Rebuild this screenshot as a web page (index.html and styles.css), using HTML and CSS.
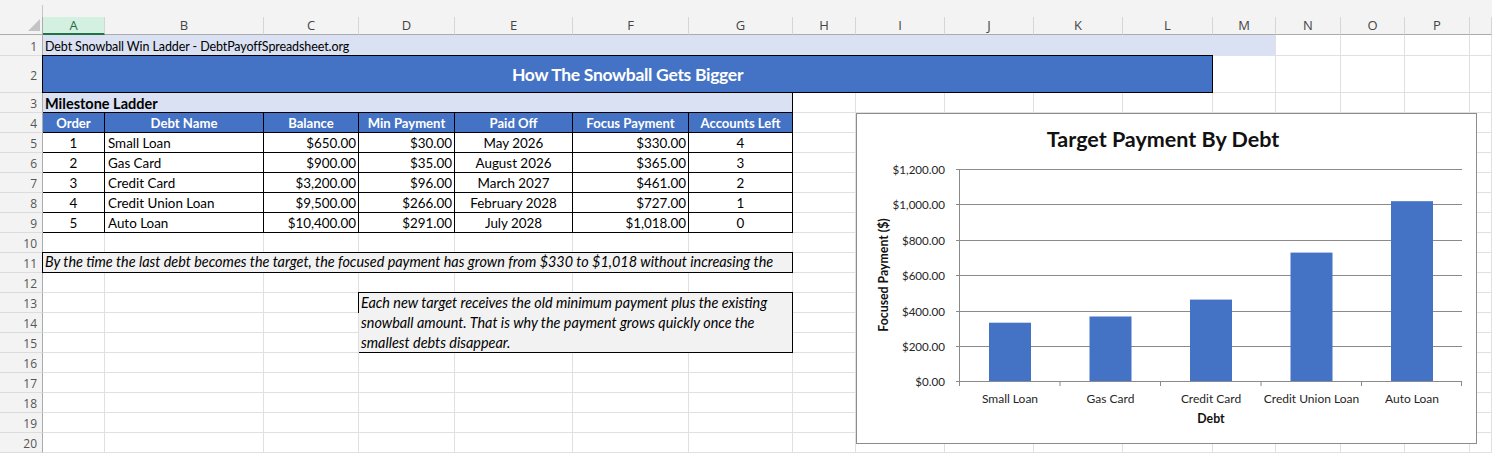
FILE: index.html
```html
<!DOCTYPE html>
<html>
<head>
  <meta charset="utf-8">
  <link rel="stylesheet" href="styles.css">
</head>
<body>
  <div class="topbar"><div class="namebox"></div></div>

  <div class="sheet">
    <!-- column headers -->
    <div class="corner"></div>
    <div class="ch sel">A</div><div class="ch">B</div><div class="ch">C</div><div class="ch">D</div><div class="ch">E</div><div class="ch">F</div><div class="ch">G</div><div class="ch">H</div><div class="ch">I</div><div class="ch">J</div><div class="ch">K</div><div class="ch">L</div><div class="ch">M</div><div class="ch">N</div><div class="ch">O</div><div class="ch">P</div><div class="ch"></div>

    <!-- row 1 -->
    <div class="rh">1</div>
    <div class="c band">Debt Snowball Win Ladder - DebtPayoffSpreadsheet.org</div>
    <div class="c"></div><div class="c"></div><div class="c"></div><div class="c"></div>

    <!-- row 2 -->
    <div class="rh">2</div>
    <div class="banner">How The Snowball Gets Bigger</div>
    <div class="c"></div><div class="c"></div><div class="c"></div><div class="c"></div><div class="c"></div>

    <!-- row 3 -->
    <div class="rh">3</div>
    <div class="c section">Milestone Ladder</div>
    <div class="c"></div><div class="c"></div><div class="c"></div><div class="c"></div><div class="c"></div><div class="c"></div><div class="c"></div><div class="c"></div><div class="c"></div><div class="c"></div>

    <!-- row 4: table header -->
    <div class="rh">4</div>
    <div class="c th">Order</div>
    <div class="c th">Debt Name</div>
    <div class="c th">Balance</div>
    <div class="c th">Min Payment</div>
    <div class="c th">Paid Off</div>
    <div class="c th">Focus Payment</div>
    <div class="c th">Accounts Left</div>
    <div class="c"></div><div class="c"></div><div class="c"></div><div class="c"></div><div class="c"></div><div class="c"></div><div class="c"></div><div class="c"></div><div class="c"></div><div class="c"></div>

    <!-- rows 5-9: debts -->
    <div class="rh">5</div>
    <div class="c td ctr">1</div>
    <div class="c td">Small Loan</div>
    <div class="c td num">$650.00</div>
    <div class="c td num">$30.00</div>
    <div class="c td ctr">May 2026</div>
    <div class="c td num">$330.00</div>
    <div class="c td ctr">4</div>
    <div class="c"></div><div class="c"></div><div class="c"></div><div class="c"></div><div class="c"></div><div class="c"></div><div class="c"></div><div class="c"></div><div class="c"></div><div class="c"></div>

    <div class="rh">6</div>
    <div class="c td ctr">2</div>
    <div class="c td">Gas Card</div>
    <div class="c td num">$900.00</div>
    <div class="c td num">$35.00</div>
    <div class="c td ctr">August 2026</div>
    <div class="c td num">$365.00</div>
    <div class="c td ctr">3</div>
    <div class="c"></div><div class="c"></div><div class="c"></div><div class="c"></div><div class="c"></div><div class="c"></div><div class="c"></div><div class="c"></div><div class="c"></div><div class="c"></div>

    <div class="rh">7</div>
    <div class="c td ctr">3</div>
    <div class="c td">Credit Card</div>
    <div class="c td num">$3,200.00</div>
    <div class="c td num">$96.00</div>
    <div class="c td ctr">March 2027</div>
    <div class="c td num">$461.00</div>
    <div class="c td ctr">2</div>
    <div class="c"></div><div class="c"></div><div class="c"></div><div class="c"></div><div class="c"></div><div class="c"></div><div class="c"></div><div class="c"></div><div class="c"></div><div class="c"></div>

    <div class="rh">8</div>
    <div class="c td ctr">4</div>
    <div class="c td">Credit Union Loan</div>
    <div class="c td num">$9,500.00</div>
    <div class="c td num">$266.00</div>
    <div class="c td ctr">February 2028</div>
    <div class="c td num">$727.00</div>
    <div class="c td ctr">1</div>
    <div class="c"></div><div class="c"></div><div class="c"></div><div class="c"></div><div class="c"></div><div class="c"></div><div class="c"></div><div class="c"></div><div class="c"></div><div class="c"></div>

    <div class="rh">9</div>
    <div class="c td ctr">5</div>
    <div class="c td">Auto Loan</div>
    <div class="c td num">$10,400.00</div>
    <div class="c td num">$291.00</div>
    <div class="c td ctr">July 2028</div>
    <div class="c td num">$1,018.00</div>
    <div class="c td ctr">0</div>
    <div class="c"></div><div class="c"></div><div class="c"></div><div class="c"></div><div class="c"></div><div class="c"></div><div class="c"></div><div class="c"></div><div class="c"></div><div class="c"></div>

    <!-- row 10 -->
    <div class="rh">10</div>
    <div class="c"></div><div class="c"></div><div class="c"></div><div class="c"></div><div class="c"></div><div class="c"></div><div class="c"></div><div class="c"></div><div class="c"></div><div class="c"></div><div class="c"></div><div class="c"></div><div class="c"></div><div class="c"></div><div class="c"></div><div class="c"></div><div class="c"></div>

    <!-- row 11 -->
    <div class="rh">11</div>
    <div class="summary">By the time the last debt becomes the target, the focused payment has grown from $330 to $1,018 without increasing the</div>
    <div class="c"></div><div class="c"></div><div class="c"></div><div class="c"></div><div class="c"></div><div class="c"></div><div class="c"></div><div class="c"></div><div class="c"></div><div class="c"></div>

    <!-- row 12 -->
    <div class="rh">12</div>
    <div class="c"></div><div class="c"></div><div class="c"></div><div class="c"></div><div class="c"></div><div class="c"></div><div class="c"></div><div class="c"></div><div class="c"></div><div class="c"></div><div class="c"></div><div class="c"></div><div class="c"></div><div class="c"></div><div class="c"></div><div class="c"></div><div class="c"></div>

    <!-- rows 13-15, note box spans D:G -->
    <div class="rh">13</div>
    <div class="c"></div><div class="c"></div><div class="c"></div>
    <div class="explain">Each new target receives the old minimum payment plus the existing<br>snowball amount. That is why the payment grows quickly once the<br>smallest debts disappear.</div>
    <div class="c"></div><div class="c"></div><div class="c"></div><div class="c"></div><div class="c"></div><div class="c"></div><div class="c"></div><div class="c"></div><div class="c"></div><div class="c"></div>

    <div class="rh">14</div>
    <div class="c"></div><div class="c"></div><div class="c"></div>
    <div class="c"></div><div class="c"></div><div class="c"></div><div class="c"></div><div class="c"></div><div class="c"></div><div class="c"></div><div class="c"></div><div class="c"></div><div class="c"></div>

    <div class="rh">15</div>
    <div class="c"></div><div class="c"></div><div class="c"></div>
    <div class="c"></div><div class="c"></div><div class="c"></div><div class="c"></div><div class="c"></div><div class="c"></div><div class="c"></div><div class="c"></div><div class="c"></div><div class="c"></div>

    <!-- rows 16-20 -->
    <div class="rh">16</div>
    <div class="c"></div><div class="c"></div><div class="c"></div><div class="c"></div><div class="c"></div><div class="c"></div><div class="c"></div><div class="c"></div><div class="c"></div><div class="c"></div><div class="c"></div><div class="c"></div><div class="c"></div><div class="c"></div><div class="c"></div><div class="c"></div><div class="c"></div>
    <div class="rh">17</div>
    <div class="c"></div><div class="c"></div><div class="c"></div><div class="c"></div><div class="c"></div><div class="c"></div><div class="c"></div><div class="c"></div><div class="c"></div><div class="c"></div><div class="c"></div><div class="c"></div><div class="c"></div><div class="c"></div><div class="c"></div><div class="c"></div><div class="c"></div>
    <div class="rh">18</div>
    <div class="c"></div><div class="c"></div><div class="c"></div><div class="c"></div><div class="c"></div><div class="c"></div><div class="c"></div><div class="c"></div><div class="c"></div><div class="c"></div><div class="c"></div><div class="c"></div><div class="c"></div><div class="c"></div><div class="c"></div><div class="c"></div><div class="c"></div>
    <div class="rh">19</div>
    <div class="c"></div><div class="c"></div><div class="c"></div><div class="c"></div><div class="c"></div><div class="c"></div><div class="c"></div><div class="c"></div><div class="c"></div><div class="c"></div><div class="c"></div><div class="c"></div><div class="c"></div><div class="c"></div><div class="c"></div><div class="c"></div><div class="c"></div>
    <div class="rh">20</div>
    <div class="c"></div><div class="c"></div><div class="c"></div><div class="c"></div><div class="c"></div><div class="c"></div><div class="c"></div><div class="c"></div><div class="c"></div><div class="c"></div><div class="c"></div><div class="c"></div><div class="c"></div><div class="c"></div><div class="c"></div><div class="c"></div><div class="c"></div>

    <!-- floating chart -->
    <div class="chart">
      <svg width="619" height="329" viewBox="0 0 619 329">
        <text class="chart-title" x="306" y="33" text-anchor="middle">Target Payment By Debt</text>

        <g class="gridline">
          <line x1="99" y1="55.5" x2="605" y2="55.5"/>
          <line x1="99" y1="90.5" x2="605" y2="90.5"/>
          <line x1="99" y1="126.5" x2="605" y2="126.5"/>
          <line x1="99" y1="161.5" x2="605" y2="161.5"/>
          <line x1="99" y1="197.5" x2="605" y2="197.5"/>
          <line x1="99" y1="232.5" x2="605" y2="232.5"/>
          <line x1="102.5" y1="55" x2="102.5" y2="268"/>
        </g>

        <g class="bar">
          <rect x="132" y="208.7" width="42" height="58.8"/>
          <rect x="232.5" y="202.5" width="42" height="65"/>
          <rect x="333" y="185.6" width="42" height="81.9"/>
          <rect x="433.5" y="138.6" width="42" height="128.9"/>
          <rect x="534" y="87.2" width="42" height="180.3"/>
        </g>

        <g class="gridline">
          <line x1="99" y1="267.5" x2="605" y2="267.5"/>
          <line x1="203" y1="267" x2="203" y2="272"/>
          <line x1="303.5" y1="267" x2="303.5" y2="272"/>
          <line x1="404" y1="267" x2="404" y2="272"/>
          <line x1="504.5" y1="267" x2="504.5" y2="272"/>
          <line x1="604.5" y1="267" x2="604.5" y2="272"/>
          <line x1="102.5" y1="267" x2="102.5" y2="272"/>
        </g>

        <g class="axis-label value" text-anchor="end">
          <text x="88" y="60">$1,200.00</text>
          <text x="88" y="95">$1,000.00</text>
          <text x="88" y="131">$800.00</text>
          <text x="88" y="166">$600.00</text>
          <text x="88" y="202">$400.00</text>
          <text x="88" y="237">$200.00</text>
          <text x="88" y="272">$0.00</text>
        </g>

        <g class="axis-label" text-anchor="middle">
          <text x="153" y="289">Small Loan</text>
          <text x="253.5" y="289">Gas Card</text>
          <text x="354" y="289">Credit Card</text>
          <text x="454.5" y="289">Credit Union Loan</text>
          <text x="555" y="289">Auto Loan</text>
        </g>

        <text class="axis-title" x="354" y="309" text-anchor="middle">Debt</text>
        <text class="axis-title" transform="translate(31 161) rotate(-90)" text-anchor="middle">Focused Payment ($)</text>
      </svg>
    </div>
  </div>
</body>
</html>
```

FILE: styles.css
```css
* {
  box-sizing: border-box;
}

body {
  margin: 0;
  background: #ffffff;
  font-family: Lato, "Liberation Sans", sans-serif;
  color: #000000;
}

.topbar {
  height: 17px;
  padding-top: 5px;
  background: #f3f3f3;
}

.topbar .namebox {
  width: 43px;
  height: 12px;
  border-right: 1px solid #c6c6c6;
}

/* grid of cells */
.sheet {
  position: relative;
  display: grid;
  grid-template-columns: 43px 62px 159px 95px 96px 118px 116px 104px 63px 89px 89px 89px 90px 63px 65px 64px 65px 1fr;
  grid-template-rows: 18px 21px 37px repeat(18, 20px);
  font-size: 13.4px;
}

.corner {
  display: flex;
  justify-content: flex-end;
  align-items: flex-end;
  padding: 0 2px 3px 0;
  background: #f3f3f3;
  border-right: 1px solid #ababab;
  border-bottom: 1px solid #ababab;
}

.corner::after {
  content: "";
  width: 12px;
  height: 12px;
  background: #c4c4c4;
  clip-path: polygon(100% 0, 100% 100%, 0 100%);
}

.ch {
  background: #f3f3f3;
  border-right: 1px solid #d6d6d6;
  border-bottom: 1px solid #ababab;
  font: 13px "Open Sans", sans-serif;
  line-height: 17px;
  color: #444444;
  text-align: center;
}

.ch.sel {
  background: #d3f0e0;
  color: #1e6c41;
  border-bottom: 2px solid #217346;
}

.rh {
  display: flex;
  align-items: center;
  justify-content: flex-end;
  padding: 2px 5px 0 0;
  background: #f3f3f3;
  border-right: 1px solid #ababab;
  border-bottom: 1px solid #dcdcdc;
  font: 12px "Open Sans", sans-serif;
  color: #555555;
}

.c {
  padding: 1px 3px 0;
  line-height: 18px;
  white-space: nowrap;
  border-right: 1px solid #e0e0e0;
  border-bottom: 1px solid #e0e0e0;
}

.band {
  grid-column: span 13;
  padding: 3px 2px 0;
  background: #d9e1f2;
  border-bottom-color: #d9e1f2;
  font-size: 12.5px;
  letter-spacing: -0.1px;
}

.banner {
  grid-column: span 12;
  display: flex;
  align-items: center;
  justify-content: center;
  margin: -1px 0 0 -1px;
  border: 1px solid #000000;
  background: #4472c4;
  color: #ffffff;
  font-size: 17.5px;
  font-weight: 700;
  letter-spacing: -0.3px;
}

.section {
  grid-column: span 7;
  padding: 1px 2px 0;
  line-height: 19px;
  background: #d9e1f2;
  font-size: 14.5px;
  font-weight: 700;
  border-color: #000000;
}

.th {
  background: #4472c4;
  color: #ffffff;
  font-size: 13.1px;
  font-weight: 700;
  text-align: center;
  border-color: #000000;
}

.td {
  border-color: #000000;
}

.ctr {
  text-align: center;
}

.num {
  text-align: right;
  padding-right: 2px;
}

.summary {
  grid-column: span 7;
  margin: -1px 0 0 -1px;
  padding: 0 2px;
  overflow: hidden;
  border: 1px solid #000000;
  background: #f2f2f2;
  font-size: 14.4px;
  font-style: italic;
  line-height: 18px;
  white-space: nowrap;
}

.explain {
  grid-column: span 4;
  grid-row: span 3;
  margin: -1px 0 0 -1px;
  padding: 0 2px;
  border: 1px solid #000000;
  background: #f2f2f2;
  font-size: 14.4px;
  font-style: italic;
  line-height: 20px;
  white-space: nowrap;
}

/* chart floats over the cells */
.chart {
  position: absolute;
  left: 856px;
  top: 96px;
  width: 621px;
  height: 331px;
  border: 1px solid #8c8c8c;
  background: #ffffff;
}

.chart svg {
  display: block;
}

.chart-title {
  font-size: 21.5px;
  font-weight: 700;
  fill: #111111;
}

.gridline line {
  stroke: #8a8a8a;
  stroke-width: 1;
}

.bar rect {
  fill: #4472c4;
}

.axis-label text {
  font-size: 12px;
  fill: #262626;
}

.axis-label.value text {
  font-size: 11.6px;
}

.axis-title {
  font-size: 12.3px;
  font-weight: 700;
  fill: #111111;
}
```
